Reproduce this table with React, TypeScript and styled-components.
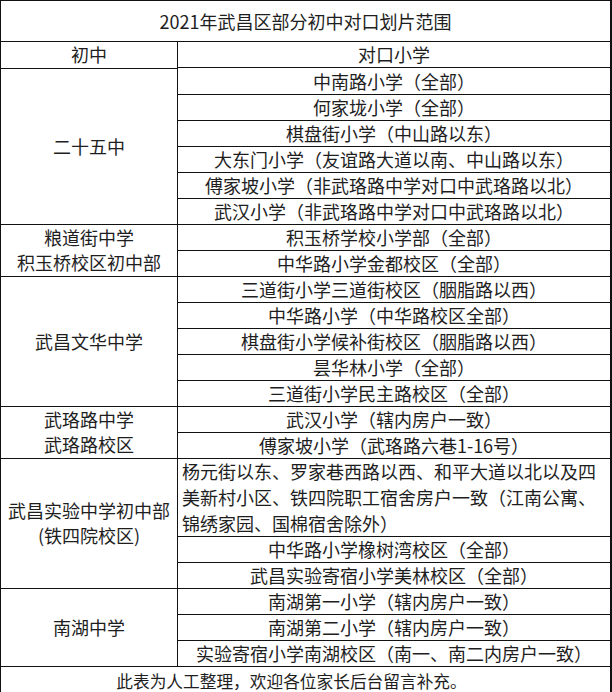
import styled, { createGlobalStyle } from "styled-components";

//css
const GlobalStyle = createGlobalStyle`
  html, body {
    margin: 0;
    padding: 0;
    background: #fff;
  }
  body {
    font-family: "Noto Sans CJK SC", "Noto Sans", sans-serif;
    color: #1e1e1e;
  }
`;
const Table = styled.div`
  width: 612px;
  box-sizing: border-box;
  border-top: 1px solid #111;
  border-left: 1px solid #111;
  border-right: 2px solid #111;
  background: #fff;
`;
const Title = styled.div`
  height: 41px;
  box-sizing: border-box;
  border-bottom: 1px solid #111;
  display: flex;
  align-items: center;
  justify-content: center;
  font-size: 18px;
  padding-bottom: 1px;
`;
const Group = styled.div`
  display: grid;
  grid-template-columns: 177px 1fr;
`;
const School = styled.div`
  box-sizing: border-box;
  border-right: 1px solid #111;
  border-bottom: 1px solid #111;
  display: flex;
  flex-direction: column;
  align-items: center;
  justify-content: center;
  font-size: 18px;
  line-height: 25px;
  padding-bottom: 1px;
`;
const Primaries = styled.div`
  display: flex;
  flex-direction: column;
`;
const Row = styled.div<{ $lines?: number }>`
  height: ${p => (p.$lines || 1) * 26}px;
  box-sizing: border-box;
  border-bottom: 1px solid #111;
  display: flex;
  flex-direction: column;
  justify-content: center;
  align-items: ${p => (p.$lines ? "flex-start" : "center")};
  padding: 0 0 1px ${p => (p.$lines ? "4px" : "0")};
  font-size: 18px;
  line-height: 26px;
  white-space: nowrap;
`;
const Footer = styled.div`
  height: 27px;
  display: flex;
  align-items: center;
  justify-content: center;
  padding-right: 28px;
  font-size: 16.7px;
`;

//data
interface Primary {
  text: string[];
  wrap?: boolean;
}
interface Middle {
  name: string[];
  rows: Primary[];
}

const one = (t: string): Primary => ({ text: [t] });

const groups: Middle[] = [
  {
    name: ["二十五中"],
    rows: [
      one("中南路小学（全部）"),
      one("何家垅小学（全部）"),
      one("棋盘街小学（中山路以东）"),
      one("大东门小学（友谊路大道以南、中山路以东）"),
      one("傅家坡小学（非武珞路中学对口中武珞路以北）"),
      one("武汉小学（非武珞路中学对口中武珞路以北）"),
    ],
  },
  {
    name: ["粮道街中学", "积玉桥校区初中部"],
    rows: [one("积玉桥学校小学部（全部）"), one("中华路小学金都校区（全部）")],
  },
  {
    name: ["武昌文华中学"],
    rows: [
      one("三道街小学三道街校区（胭脂路以西）"),
      one("中华路小学（中华路校区全部）"),
      one("棋盘街小学候补街校区（胭脂路以西）"),
      one("昙华林小学（全部）"),
      one("三道街小学民主路校区（全部）"),
    ],
  },
  {
    name: ["武珞路中学", "武珞路校区"],
    rows: [one("武汉小学（辖内房户一致）"), one("傅家坡小学（武珞路六巷1-16号）")],
  },
  {
    name: ["武昌实验中学初中部", "(铁四院校区)"],
    rows: [
      {
        text: [
          "杨元街以东、罗家巷西路以西、和平大道以北以及四",
          "美新村小区、铁四院职工宿舍房户一致（江南公寓、",
          "锦绣家园、国棉宿舍除外）",
        ],
        wrap: true,
      },
      one("中华路小学橡树湾校区（全部）"),
      one("武昌实验寄宿小学美林校区（全部）"),
    ],
  },
  {
    name: ["南湖中学"],
    rows: [
      one("南湖第一小学（辖内房户一致）"),
      one("南湖第二小学（辖内房户一致）"),
      one("实验寄宿小学南湖校区（南一、南二内房户一致）"),
    ],
  },
];

function App() {
  return (
    <>
      <GlobalStyle />
      <Table>
        <Title>2021年武昌区部分初中对口划片范围</Title>
        <Group>
          <School>初中</School>
          <Primaries>
            <Row>对口小学</Row>
          </Primaries>
        </Group>
        {groups.map(g => (
          <Group key={g.name[0]}>
            <School>
              {g.name.map(n => (
                <span key={n}>{n}</span>
              ))}
            </School>
            <Primaries>
              {g.rows.map(r => (
                <Row key={r.text[0]} $lines={r.wrap ? r.text.length : undefined}>
                  {r.text.map(t => (
                    <span key={t}>{t}</span>
                  ))}
                </Row>
              ))}
            </Primaries>
          </Group>
        ))}
        <Footer>此表为人工整理，欢迎各位家长后台留言补充。</Footer>
      </Table>
    </>
  );
}

export default App;
